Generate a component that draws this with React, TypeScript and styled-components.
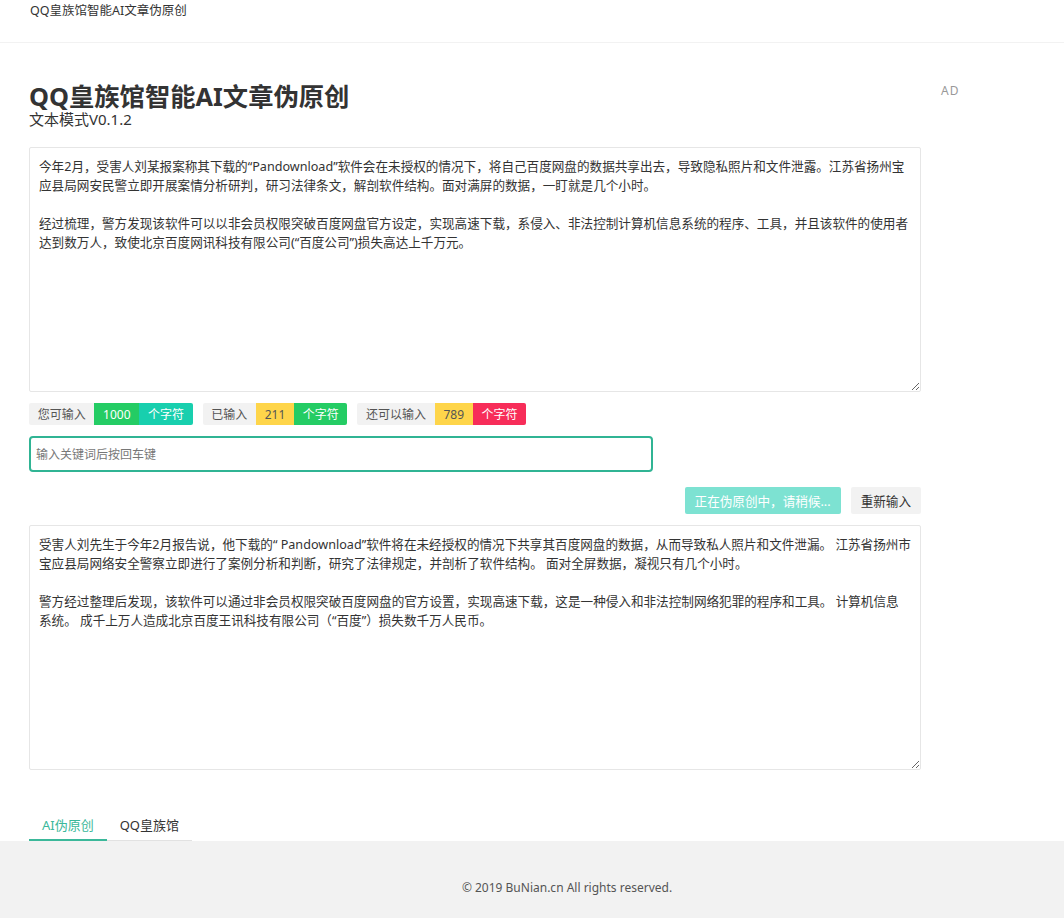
import React from "react"
import styled, { createGlobalStyle } from "styled-components"

const GlobalStyle = createGlobalStyle`
    * {
        box-sizing: border-box;
    }
    body {
        margin: 0;
        background: #fff;
        color: #333;
        font-family: "Noto Sans", "Noto Sans CJK SC", sans-serif;
        font-size: 13px;
    }
`;

const Header = styled.div`
    height: 43px;
    padding: 1px 30px 0;
    border-bottom: 1px solid #f2f2f2;
    font-size: 12.5px;
    line-height: 20px;
    color: #333;
`;

const Main = styled.div`
    display: flex;
    flex-flow: row nowrap;
    gap: 20px;
    padding: 40px 29px 0;
`;

const Content = styled.div`
    width: 892px;
    flex-shrink: 0;
`;

const Side = styled.div`
    font-size: 12px;
    line-height: 16px;
    letter-spacing: 1px;
    color: #999;
`;

const Title = styled.h1`
    margin: 0;
    font-size: 25.3px;
    line-height: 27px;
    font-weight: bold;
    color: #333;
`;

const Subtitle = styled.div`
    font-size: 15px;
    line-height: 18px;
    color: #333;
    margin-bottom: 19px;
`;

const TextBox = styled.textarea`
    display: block;
    width: 100%;
    height: 245px;
    padding: 9px 9px;
    border: 1px solid #e6e6e6;
    border-radius: 2px;
    font-family: "Noto Sans", "Noto Sans CJK SC", sans-serif;
    font-size: 12.6px;
    line-height: 19px;
    color: #333;
    outline: none;
    resize: vertical;
`;

const Counters = styled.div`
    display: flex;
    flex-flow: row nowrap;
    margin-top: 11px;
    height: 22px;
`;

const Group = styled.div`
    display: flex;
    margin-right: 10px;
    border-radius: 2px;
    overflow: hidden;
`;

const Badge = styled.span<{ $bg: string; $fg?: string }>`
    display: inline-flex;
    align-items: center;
    padding: 0 8.7px;
    height: 22px;
    font-size: 12px;
    white-space: nowrap;
    background: ${p => p.$bg};
    color: ${p => p.$fg || "#fff"};
`;

const KeywordInput = styled.input`
    display: block;
    margin-top: 11px;
    width: 624px;
    height: 36px;
    padding: 0 5px;
    border: 2px solid #30b494;
    border-radius: 4px;
    font-family: "Noto Sans", "Noto Sans CJK SC", sans-serif;
    font-size: 12px;
    color: #333;
    outline: none;
    &::placeholder {
        color: #777;
    }
`;

const Actions = styled.div`
    display: flex;
    flex-flow: row nowrap;
    justify-content: flex-end;
    gap: 10px;
    margin: 15px 0 11px;
`;

const Button = styled.button<{ $primary?: boolean }>`
    height: 27px;
    padding: 0 10px;
    border: none;
    border-radius: 2px;
    font-family: "Noto Sans", "Noto Sans CJK SC", sans-serif;
    font-size: 12.6px;
    white-space: nowrap;
    background: ${p => (p.$primary ? "#7de2d2" : "#f2f2f2")};
    color: ${p => (p.$primary ? "#fff" : "#333")};
`;

const Tabs = styled.div`
    display: inline-flex;
    margin-top: 40px;
    border-bottom: 1px solid #e2e2e2;
`;

const Tab = styled.div<{ $active?: boolean }>`
    height: 31px;
    padding: 0 13px;
    line-height: 30px;
    font-size: 13px;
    white-space: nowrap;
    margin-bottom: -1px;
    color: ${p => (p.$active ? "#3bb89a" : "#333")};
    border-bottom: 2px solid ${p => (p.$active ? "#3bb89a" : "transparent")};
`;

const Footer = styled.div`
    background: #f2f2f2;
    padding: 37px 0 37px 70px;
    text-align: center;
    font-size: 12px;
    line-height: 20px;
    color: #555;
`;

const source = `今年2月，受害人刘某报案称其下载的“Pandownload”软件会在未授权的情况下，将自己百度网盘的数据共享出去，导致隐私照片和文件泄露。江苏省扬州宝应县局网安民警立即开展案情分析研判，研习法律条文，解剖软件结构。面对满屏的数据，一盯就是几个小时。

经过梳理，警方发现该软件可以以非会员权限突破百度网盘官方设定，实现高速下载，系侵入、非法控制计算机信息系统的程序、工具，并且该软件的使用者达到数万人，致使北京百度网讯科技有限公司(“百度公司”)损失高达上千万元。`;

const result = `受害人刘先生于今年2月报告说，他下载的“ Pandownload”软件将在未经授权的情况下共享其百度网盘的数据，从而导致私人照片和文件泄漏。 江苏省扬州市宝应县局网络安全警察立即进行了案例分析和判断，研究了法律规定，并剖析了软件结构。 面对全屏数据，凝视只有几个小时。

警方经过整理后发现，该软件可以通过非会员权限突破百度网盘的官方设置，实现高速下载，这是一种侵入和非法控制网络犯罪的程序和工具。 计算机信息系统。 成千上万人造成北京百度王讯科技有限公司（“百度”）损失数千万人民币。`;

const App = () => {
    return (
        <>
            <GlobalStyle />
            <Header>QQ皇族馆智能AI文章伪原创</Header>
            <Main>
                <Content>
                    <Title>QQ皇族馆智能AI文章伪原创</Title>
                    <Subtitle>文本模式V0.1.2</Subtitle>
                    <TextBox defaultValue={source} />
                    <Counters>
                        <Group>
                            <Badge $bg="#f2f2f2" $fg="#555">您可输入</Badge>
                            <Badge $bg="#24cc64">1000</Badge>
                            <Badge $bg="#18cfae">个字符</Badge>
                        </Group>
                        <Group>
                            <Badge $bg="#f2f2f2" $fg="#555">已输入</Badge>
                            <Badge $bg="#fed54a" $fg="#555">211</Badge>
                            <Badge $bg="#24cc64">个字符</Badge>
                        </Group>
                        <Group>
                            <Badge $bg="#f2f2f2" $fg="#555">还可以输入</Badge>
                            <Badge $bg="#fed54a" $fg="#555">789</Badge>
                            <Badge $bg="#f72d59">个字符</Badge>
                        </Group>
                    </Counters>
                    <KeywordInput placeholder="输入关键词后按回车键" />
                    <Actions>
                        <Button $primary>正在伪原创中，请稍候...</Button>
                        <Button>重新输入</Button>
                    </Actions>
                    <TextBox defaultValue={result} />
                    <Tabs>
                        <Tab $active>AI伪原创</Tab>
                        <Tab>QQ皇族馆</Tab>
                    </Tabs>
                </Content>
                <Side>AD</Side>
            </Main>
            <Footer>© 2019 BuNian.cn All rights reserved.</Footer>
        </>
    )
}

export default App;
